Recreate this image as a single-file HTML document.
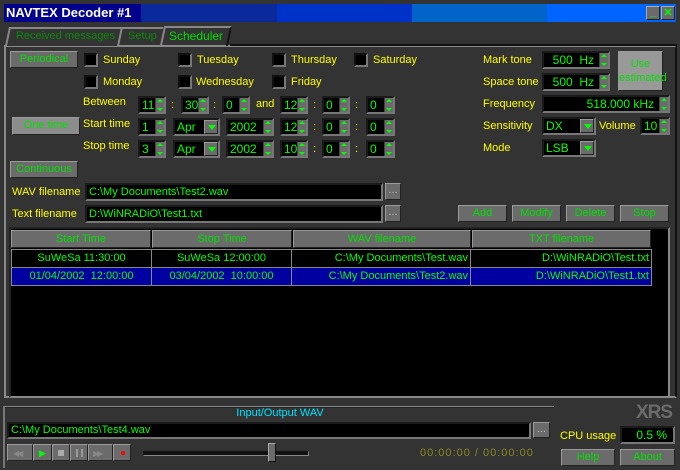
<!DOCTYPE html>
<html><head><meta charset="utf-8"><style>
*{margin:0;padding:0;box-sizing:border-box}
body{width:680px;height:470px;background:#333;font-family:"Liberation Sans",sans-serif;font-size:11px;position:relative;overflow:hidden}
div,span{position:absolute}
.y{color:#ffff00;white-space:nowrap}
.btn{background:#6b6b6b;color:#00e000;text-align:center;border:1px solid;border-color:#9a9a9a #222 #222 #9a9a9a;line-height:15px}
.cb{width:14px;height:14px;background:#000;border:2px solid;border-color:#111 #777 #777 #111}
.box{background:#000;border:2px solid;border-color:#1a1a1a #777 #777 #1a1a1a;color:#00ff00;font-size:12px;line-height:14px;padding-left:2px;white-space:nowrap;overflow:hidden}
.sp{right:0;top:0;width:9px;height:100%;background:#6b6b6b;border-left:1px solid #444}
.sp:before{content:"";position:absolute;left:1px;top:1px;border:3px solid transparent;border-bottom:3px solid #0f0;border-top:0}
.sp:after{content:"";position:absolute;left:1px;bottom:1px;border:3px solid transparent;border-top:3px solid #0f0;border-bottom:0}
.dd{right:0;top:0;width:14px;height:100%;background:#6b6b6b;border:1px solid;border-color:#999 #222 #222 #999}
.dd:after{content:"";position:absolute;left:3px;top:4px;border:4px solid transparent;border-top:5px solid #0f0;border-bottom:0}
.th{background:#6b6b6b;color:#00e000;text-align:center;border:1px solid;border-color:#999 #222 #222 #999;line-height:16px;top:230px;height:18px}
.td{color:#00ff00;line-height:17px;height:18px;border-right:1px solid #888;border-bottom:1px solid #888;white-space:nowrap;padding:0 2px}
.tb{background:#6b6b6b;border:1px solid;border-color:#999 #222 #222 #999;top:444px;height:17px}
</style></head><body>
<div style="left:4px;top:4px;width:672px;height:18px;background:linear-gradient(90deg,#00008c 0,#00008c 137px,#0a2a9c 137px,#0a2a9c 273px,#0032c8 273px,#0032c8 408px,#0064c8 408px,#0064c8 543px,#0064ff 543px)"></div>
<div style="left:6px;top:4px;color:#fff;font-weight:bold;font-size:13px;line-height:18px">NAVTEX Decoder #1</div>
<div style="left:646px;top:6px;width:14px;height:14px;background:#6b6b6b;border:1px solid;border-color:#aaa #222 #222 #aaa;color:#0f0;font-weight:bold;text-align:center;line-height:10px">_</div>
<div style="left:661px;top:6px;width:14px;height:14px;background:#6b6b6b;border:1px solid;border-color:#aaa #222 #222 #aaa;color:#0f0;font-weight:bold;text-align:center;line-height:12px;font-size:11px">✕</div>
<div style="left:4px;top:45px;width:673px;height:353px;border:2px solid;border-color:#8a8a8a #111 #8a8a8a #8a8a8a"></div>
<div style="left:230px;top:44px;width:447px;height:2px;background:#111"></div>
<div style="left:7px;top:27px;width:113px;height:19px;background:#333;border-top:2px solid #888;border-left:2px solid #888;transform:skewX(-12deg)"></div>
<div style="left:16px;top:30px;color:#0a8a0a;font-size:11px">Received messages</div>
<div style="left:119px;top:27px;width:42px;height:19px;border-top:2px solid #888;border-left:2px solid #888;transform:skewX(-12deg)"></div>
<div style="left:128px;top:30px;color:#0a8a0a;font-size:11px">Setup</div>
<div style="left:162px;top:26px;width:68px;height:20px;border-top:2px solid #888;border-left:2px solid #888;border-right:2px solid #111;transform:skewX(-12deg)"></div>
<div style="left:169px;top:29px;color:#00e000;font-size:12px">Scheduler</div>
<div class="btn" style="left:10px;top:51px;width:68px;height:17px">Periodical</div>
<div class="btn" style="left:12px;top:117px;width:68px;height:18px;background:#8c8c8c">One time</div>
<div class="btn" style="left:10px;top:161px;width:68px;height:17px">Continuous</div>
<div class="cb" style="left:84px;top:53px"></div><div class="y" style="left:103px;top:54px">Sunday</div>
<div class="cb" style="left:178px;top:53px"></div><div class="y" style="left:197px;top:54px">Tuesday</div>
<div class="cb" style="left:272px;top:53px"></div><div class="y" style="left:291px;top:54px">Thursday</div>
<div class="cb" style="left:354px;top:53px"></div><div class="y" style="left:373px;top:54px">Saturday</div>
<div class="cb" style="left:84px;top:75px"></div><div class="y" style="left:103px;top:76px">Monday</div>
<div class="cb" style="left:178px;top:75px"></div><div class="y" style="left:196px;top:76px">Wednesday</div>
<div class="cb" style="left:272px;top:75px"></div><div class="y" style="left:291px;top:76px">Friday</div>
<div class="y" style="left:83px;top:96px">Between</div>
<div class="y" style="left:83px;top:118px">Start time</div>
<div class="y" style="left:83px;top:140px">Stop time</div>
<div class="box" style="left:138px;top:96px;width:28px;height:18px">11<span class="sp"></span></div>
<div class="y" style="left:171px;top:99px">:</div>
<div class="box" style="left:181px;top:96px;width:28px;height:18px">30<span class="sp"></span></div>
<div class="y" style="left:213px;top:99px">:</div>
<div class="box" style="left:222px;top:96px;width:28px;height:18px">0<span class="sp"></span></div>
<div class="y" style="left:256px;top:98px">and</div>
<div class="box" style="left:280px;top:96px;width:28px;height:18px">12<span class="sp"></span></div>
<div class="y" style="left:313px;top:99px">:</div>
<div class="box" style="left:322px;top:96px;width:28px;height:18px">0<span class="sp"></span></div>
<div class="y" style="left:355px;top:99px">:</div>
<div class="box" style="left:366px;top:96px;width:29px;height:18px">0<span class="sp"></span></div>
<div class="box" style="left:138px;top:118px;width:28px;height:18px">1<span class="sp"></span></div>
<div class="box" style="left:173px;top:118px;width:47px;height:18px">Apr<span class="dd"></span></div>
<div class="box" style="left:226px;top:118px;width:48px;height:18px">2002<span class="sp"></span></div>
<div class="box" style="left:280px;top:118px;width:28px;height:18px">12<span class="sp"></span></div>
<div class="y" style="left:313px;top:121px">:</div>
<div class="box" style="left:322px;top:118px;width:28px;height:18px">0<span class="sp"></span></div>
<div class="y" style="left:355px;top:121px">:</div>
<div class="box" style="left:366px;top:118px;width:29px;height:18px">0<span class="sp"></span></div>
<div class="box" style="left:138px;top:140px;width:28px;height:18px">3<span class="sp"></span></div>
<div class="box" style="left:173px;top:140px;width:47px;height:18px">Apr<span class="dd"></span></div>
<div class="box" style="left:226px;top:140px;width:48px;height:18px">2002<span class="sp"></span></div>
<div class="box" style="left:280px;top:140px;width:28px;height:18px">10<span class="sp"></span></div>
<div class="y" style="left:313px;top:143px">:</div>
<div class="box" style="left:322px;top:140px;width:28px;height:18px">0<span class="sp"></span></div>
<div class="y" style="left:355px;top:143px">:</div>
<div class="box" style="left:366px;top:140px;width:29px;height:18px">0<span class="sp"></span></div>
<div class="y" style="left:483px;top:54px">Mark tone</div>
<div class="y" style="left:483px;top:76px">Space tone</div>
<div class="y" style="left:483px;top:98px">Frequency</div>
<div class="y" style="left:483px;top:120px">Sensitivity</div>
<div class="y" style="left:483px;top:142px">Mode</div>
<div class="box" style="left:542px;top:51px;width:68px;height:18px;text-align:right;padding-right:14px">500&nbsp; Hz<span class="sp"></span></div>
<div class="box" style="left:542px;top:73px;width:68px;height:18px;text-align:right;padding-right:14px">500&nbsp; Hz<span class="sp"></span></div>
<div class="box" style="left:542px;top:95px;width:128px;height:18px;text-align:right;padding-right:14px">518.000 kHz<span class="sp"></span></div>
<div class="btn" style="left:618px;top:51px;width:45px;height:40px;background:#999;line-height:14px;padding-top:5px;color:#00e000">Use<br>estimated</div>
<div class="box" style="left:542px;top:117px;width:54px;height:18px">DX<span class="dd"></span></div>
<div class="y" style="left:599px;top:120px">Volume</div>
<div class="box" style="left:640px;top:117px;width:30px;height:18px">10<span class="sp"></span></div>
<div class="box" style="left:542px;top:139px;width:54px;height:18px">LSB<span class="dd"></span></div>
<div class="y" style="left:12px;top:186px">WAV filename</div>
<div class="box" style="left:85px;top:183px;width:298px;height:18px;font-size:11px">C:\My Documents\Test2.wav</div>
<div class="btn" style="left:385px;top:183px;width:16px;height:17px;color:#bbb;line-height:12px">...</div>
<div class="y" style="left:12px;top:208px">Text filename</div>
<div class="box" style="left:85px;top:205px;width:298px;height:18px;font-size:11px">D:\WiNRADiO\Test1.txt</div>
<div class="btn" style="left:385px;top:205px;width:16px;height:17px;color:#bbb;line-height:12px">...</div>
<div class="btn" style="left:458px;top:205px;width:49px;height:17px">Add</div>
<div class="btn" style="left:512px;top:205px;width:49px;height:17px">Modify</div>
<div class="btn" style="left:566px;top:205px;width:49px;height:17px">Delete</div>
<div class="btn" style="left:620px;top:205px;width:49px;height:17px">Stop</div>
<div style="left:9px;top:227px;width:661px;height:171px;background:#000;border:2px solid;border-color:#222 #888 #888 #222"></div>
<div class="th" style="left:11px;width:140px">Start Time</div>
<div class="th" style="left:152px;width:140px">Stop Time</div>
<div class="th" style="left:293px;width:178px">WAV filename</div>
<div class="th" style="left:472px;width:179px">TXT filename</div>
<div style="left:11px;top:249px;width:641px;height:37px;border-left:1px solid #888;border-top:1px solid #888"></div>
<div class="td" style="left:12px;top:250px;width:140px;text-align:center">SuWeSa 11:30:00</div>
<div class="td" style="left:152px;top:250px;width:140px;text-align:center">SuWeSa 12:00:00</div>
<div class="td" style="left:292px;top:250px;width:179px;text-align:right">C:\My Documents\Test.wav</div>
<div class="td" style="left:471px;top:250px;width:181px;text-align:right">D:\WiNRADiO\Test.txt</div>
<div class="td" style="left:12px;top:268px;width:140px;text-align:center;background:#0000a0">01/04/2002&nbsp; 12:00:00</div>
<div class="td" style="left:152px;top:268px;width:140px;text-align:center;background:#0000a0">03/04/2002&nbsp; 10:00:00</div>
<div class="td" style="left:292px;top:268px;width:179px;text-align:right;background:#0000a0">C:\My Documents\Test2.wav</div>
<div class="td" style="left:471px;top:268px;width:181px;text-align:right;background:#0000a0">D:\WiNRADiO\Test1.txt</div>
<div style="left:3px;top:406px;width:551px;height:2px;background:#888;border-bottom:1px solid #222"></div>
<div style="left:3px;top:406px;width:2px;height:62px;background:#777"></div>
<div style="left:180px;top:407px;width:200px;text-align:center;color:#00e0ff">Input/Output WAV</div>
<div class="box" style="left:7px;top:422px;width:524px;height:17px;line-height:13px;font-size:11px">C:\My Documents\Test4.wav</div>
<div class="btn" style="left:533px;top:422px;width:17px;height:16px;color:#bbb;line-height:12px">...</div>
<div class="tb" style="left:7px;width:26px"><span style="left:5px;top:4px;color:#888;font-size:8px;letter-spacing:-2px">◀◀</span></div>
<div class="tb" style="left:33px;width:19px"><span style="left:5px;top:3px;color:#0f0;font-size:9px">▶</span></div>
<div class="tb" style="left:52px;width:18px"><span style="left:5px;top:5px;width:6px;height:6px;background:#aaa"></span></div>
<div class="tb" style="left:70px;width:18px"><span style="left:5px;top:4px;width:2px;height:8px;background:#999"></span><span style="left:10px;top:4px;width:2px;height:8px;background:#999"></span></div>
<div class="tb" style="left:88px;width:25px"><span style="left:4px;top:4px;color:#888;font-size:8px;letter-spacing:-2px">▶▶</span></div>
<div class="tb" style="left:113px;width:18px"><span style="left:7px;top:6px;width:4px;height:4px;background:#f00;border-radius:2px"></span></div>
<div style="left:143px;top:451px;width:166px;height:5px;background:#111;border:1px solid;border-color:#111 #888 #888 #111"></div>
<div style="left:268px;top:443px;width:8px;height:19px;background:#6b6b6b;border:1px solid;border-color:#aaa #111 #111 #aaa"></div>
<div style="left:420px;top:447px;color:#8a8a20;font-size:11px;letter-spacing:1px">00:00:00 / 00:00:00</div>
<div style="left:636px;top:402px;color:#6b6b6b;font-weight:bold;font-size:19px;letter-spacing:-1px">XRS</div>
<div class="y" style="left:560px;top:430px">CPU usage</div>
<div class="box" style="left:620px;top:426px;width:55px;height:18px;text-align:right;padding-right:6px">0.5 %</div>
<div class="btn" style="left:561px;top:449px;width:54px;height:17px">Help</div>
<div class="btn" style="left:620px;top:449px;width:55px;height:17px">About</div>
</body></html>
